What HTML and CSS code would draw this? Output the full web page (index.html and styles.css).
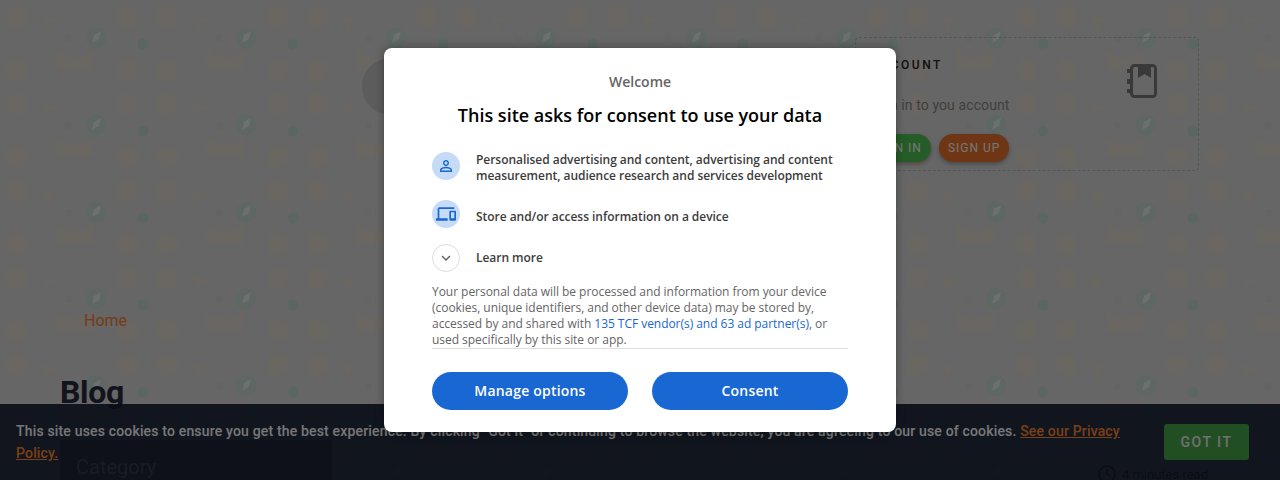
FILE: index.html
```html
<!DOCTYPE html>
<html lang="en">
<head>
    <meta charset="UTF-8">
    <meta name="viewport" content="width=device-width, initial-scale=1.0">
    <title>Blog</title>
    <link rel="stylesheet" href="styles.css">
</head>
<body>
    <!-- tiled doodle background of the site -->
    <svg class="doodles" width="1280" height="480" aria-hidden="true">
        <defs>
            <pattern id="doodle" width="150" height="87" patternUnits="userSpaceOnUse">
                <circle cx="17" cy="17" r="11" fill="#d4ccc3"/>
                <circle cx="127" cy="17" r="11" fill="#d4ccc3"/>
                <circle cx="17" cy="70" r="11" fill="#d4ccc3"/>
                <circle cx="127" cy="70" r="11" fill="#d4ccc3"/>
                <path d="M40 16l20 4-9 3-3 8z" fill="#d4ccc3"/>
                <path d="M57 50c8 10 27 10 36 0v20H57z" fill="#d4ccc3"/>
                <circle cx="96" cy="38" r="10.500" fill="#bccfc8"/>
                <path d="M92 43l2-8 7-4-2 8z" fill="#d9e0dc"/>
                <circle cx="143" cy="44" r="5.500" fill="#b5ccc3"/>
                <rect x="65" y="35" width="7" height="7" fill="#c8c8c7"/>
            </pattern>
        </defs>
        <rect width="1280" height="480" fill="#ccc"/>
        <rect width="1280" height="480" fill="url(#doodle)"/>
    </svg>

    <div class="page">
        <header class="top">
            <div class="avatar"></div>
            <section class="account">
                <div class="account-text">
                    <h4>ACCOUNT</h4>
                    <p>Sign in to you account</p>
                    <div class="account-btns">
                        <a class="pill pill-green">SIGN IN</a>
                        <a class="pill pill-orange">SIGN UP</a>
                    </div>
                </div>
                <svg class="notebook" width="30" height="34" viewBox="0 0 30 34">
                    <rect x="4.500" y="1.500" width="24" height="31" rx="3" fill="none" stroke="#727272" stroke-width="3"/>
                    <path d="M0 5h4v4H0zM0 15h4v5H0zM0 25h4v4H0z" fill="#727272"/>
                    <path d="M11 2h13v12l-6.500-4-6.500 4z" fill="#727272"/>
                </svg>
            </section>
        </header>

        <a class="crumb">Home</a>
        <h1>Blog</h1>

        <div class="content">
            <aside class="category">Category</aside>
            <div class="read-time">
                <svg width="18" height="18" viewBox="0 0 18 18">
                    <circle cx="9" cy="9" r="8" fill="none" stroke="#141a28" stroke-width="1.400"/>
                    <path d="M9 4v5l3 2" fill="none" stroke="#141a28" stroke-width="1.400"/>
                </svg>
                4 minutes read
            </div>
        </div>
    </div>

    <div class="cookie-bar">
        <p>This site uses cookies to ensure you get the best experience. By clicking "Got it" or continuing to browse the website, you are agreeing to our use of cookies. <a>See our Privacy Policy.</a></p>
        <button class="got-it">GOT IT</button>
    </div>

    <div class="overlay"></div>

    <div class="modal">
        <div class="welcome">Welcome</div>
        <h2>This site asks for consent to use your data</h2>

        <div class="purpose first">
            <span class="round">
                <svg width="18" height="18" viewBox="0 0 24 24"><path d="M12 5.900c1.160 0 2.100.94 2.100 2.100s-.94 2.100-2.100 2.100S9.900 9.160 9.900 8s.94-2.100 2.100-2.100m0 9c2.970 0 6.100 1.460 6.100 2.100v1.100H5.900V17c0-.64 3.130-2.100 6.100-2.100M12 4C9.790 4 8 5.790 8 8s1.790 4 4 4 4-1.790 4-4-1.790-4-4-4zm0 9c-2.670 0-8 1.340-8 4v3h16v-3c0-2.660-5.330-4-8-4z"/></svg>
            </span>
            <span>Personalised advertising and content, advertising and content measurement, audience research and services development</span>
        </div>
        <div class="purpose device">
            <span class="round">
                <svg width="20" height="20" viewBox="0 0 24 24"><path d="M4 6h18V4H4c-1.100 0-2 .9-2 2v11H0v3h14v-3H4V6zm19 2h-6c-.55 0-1 .45-1 1v10c0 .55.45 1 1 1h6c.55 0 1-.45 1-1V9c0-.55-.45-1-1-1zm-1 9h-4v-7h4v7z"/></svg>
            </span>
            <span class="label">Store and/or access information on a device</span>
        </div>
        <div class="purpose">
            <span class="round plain">
                <svg width="18" height="18" viewBox="0 0 24 24"><path d="M16.590 8.590L12 13.170 7.410 8.590 6 10l6 6 6-6z"/></svg>
            </span>
            <span>Learn more</span>
        </div>

        <p class="legal">Your personal data will be processed and information from your device (cookies, unique identifiers, and other device data) may be stored by, accessed by and shared with <a>135 TCF vendor(s) and 63 ad partner(s)</a>, or used specifically by this site or app.</p>

        <div class="modal-btns">
            <button>Manage options</button>
            <button>Consent</button>
        </div>
    </div>
</body>
</html>
```

FILE: styles.css
```css
html, body {
    height: 480px;
    margin: 0;
    overflow: hidden;
}
body {
    position: relative;
    font-family: Roboto, "Liberation Sans", sans-serif;
    color: #24283a;
}
.doodles {
    position: absolute;
    top: 0;
    left: 0;
}
.page {
    position: relative;
    padding: 37px 81px 0 60px;
}
.top {
    display: flex;
    justify-content: space-between;
    align-items: flex-start;
    height: 272px;
}
.avatar {
    width: 57px;
    height: 57px;
    margin: 21px 0 0 302px;
    border-radius: 50%;
    background-color: #b8b8b8;
}
.account {
    display: flex;
    justify-content: space-between;
    box-sizing: border-box;
    width: 344px;
    height: 134px;
    padding: 20px 41px 0 14px;
    border: 1px dashed #aaa;
    border-radius: 4px;
}
.account h4 {
    margin: 0;
    font-size: 12px;
    font-weight: 500;
    line-height: 14px;
    letter-spacing: 2.500px;
    color: #222;
}
.account p {
    margin: 23px 0 0;
    font-size: 14px;
    line-height: 20px;
    letter-spacing: 0.100px;
    color: #7e7e7e;
}
.account-btns {
    display: flex;
    gap: 8px;
    margin: 19px 0 0 -6px;
}
.notebook {
    margin-top: 6px;
}
.pill {
    padding: 0 9px;
    height: 28px;
    line-height: 28px;
    border-radius: 14px;
    font-size: 12px;
    letter-spacing: 1px;
    color: #eee;
    box-shadow: 0 2px 4px rgba(0, 0, 0, 0.3);
}
.pill-green {
    background-color: #4ab84e;
}
.pill-orange {
    background-color: #dc6c28;
}
.crumb {
    display: block;
    margin-left: 24px;
    font-size: 16px;
    line-height: 24px;
    color: #e8762c;
}
h1 {
    margin: 39px 0 0;
    font-size: 32px;
    line-height: 40px;
    letter-spacing: -0.300px;
    font-weight: 700;
}
/* sits over the cookie bar in the reference */
.content {
    position: relative;
    z-index: 1;
    display: flex;
    justify-content: space-between;
    align-items: flex-start;
    margin-top: 28px;
}
.category {
    box-sizing: border-box;
    width: 272px;
    height: 60px;
    padding: 13px 16px;
    border-radius: 4px;
    font-size: 20px;
    line-height: 28px;
    color: #30384c;
    background-color: #1c2232;
}
.read-time {
    display: flex;
    align-items: center;
    gap: 6px;
    margin: 25px -9px 0 0;
    font-size: 13px;
    color: #141a28;
}
.cookie-bar {
    position: absolute;
    left: 0;
    right: 0;
    bottom: 0;
    display: flex;
    justify-content: space-between;
    box-sizing: border-box;
    height: 76px;
    padding: 16px 31px 0 16px;
    background-color: rgba(17, 26, 46, 0.9);
}
.cookie-bar p {
    margin: 0;
    width: 1118px;
    font-size: 14px;
    font-weight: 500;
    line-height: 22px;
    letter-spacing: 0.170px;
    color: #eee;
}
.cookie-bar a {
    color: #f0802e;
    text-decoration: underline;
}
.got-it {
    width: 85px;
    height: 36px;
    margin-top: 4px;
    border: none;
    border-radius: 3px;
    font-family: inherit;
    font-size: 14px;
    font-weight: 500;
    letter-spacing: 1.500px;
    color: #e0e0e0;
    background-color: #449c48;
}
.overlay {
    position: absolute;
    z-index: 2;
    top: 0;
    left: 0;
    right: 0;
    bottom: 0;
    background-color: rgba(0, 0, 0, 0.5);
}
.modal {
    position: absolute;
    z-index: 3;
    top: 48px;
    left: 384px;
    box-sizing: border-box;
    width: 512px;
    height: 384px;
    padding: 24px 48px 0;
    border-radius: 8px;
    font-family: "Open Sans", "Liberation Sans", sans-serif;
    background-color: #fff;
    box-shadow: 0 0 8px rgba(0, 0, 0, 0.35);
}
.welcome {
    font-size: 14px;
    font-weight: 600;
    line-height: 20px;
    text-align: center;
    color: #656565;
}
.modal h2 {
    margin: 11px 0 0;
    font-size: 18px;
    font-weight: 600;
    line-height: 24px;
    text-align: center;
    color: #000;
}
.purpose {
    display: flex;
    align-items: center;
    gap: 16px;
    margin-top: 16px;
    font-size: 12px;
    font-weight: 600;
    line-height: 16px;
    letter-spacing: -0.040px;
    color: #3c3c3c;
}
.purpose.first {
    margin-top: 25px;
    align-items: flex-start;
}
.purpose .label {
    margin-top: 6px;
}
.round {
    flex: none;
    display: flex;
    align-items: center;
    justify-content: center;
    box-sizing: border-box;
    width: 28px;
    height: 28px;
    border-radius: 50%;
    fill: #1967d2;
    background-color: #c6dbf6;
}
.round.plain {
    border: 1px solid #dadce0;
    fill: #656565;
    background-color: #fff;
}
.legal {
    margin: 12px 0 0;
    height: 64px;
    font-size: 12px;
    line-height: 16px;
    letter-spacing: -0.040px;
    color: #656565;
    border-bottom: 1px solid #dedede;
}
.legal a {
    color: #1967d2;
}
.modal-btns {
    display: flex;
    justify-content: space-between;
    margin-top: 23px;
}
.modal-btns button {
    width: 196px;
    height: 38px;
    padding: 0 0 1px;
    border: none;
    border-radius: 19px;
    font-family: inherit;
    font-size: 14px;
    font-weight: 600;
    letter-spacing: 0.200px;
    color: #fff;
    background-color: #1967d2;
}
```
